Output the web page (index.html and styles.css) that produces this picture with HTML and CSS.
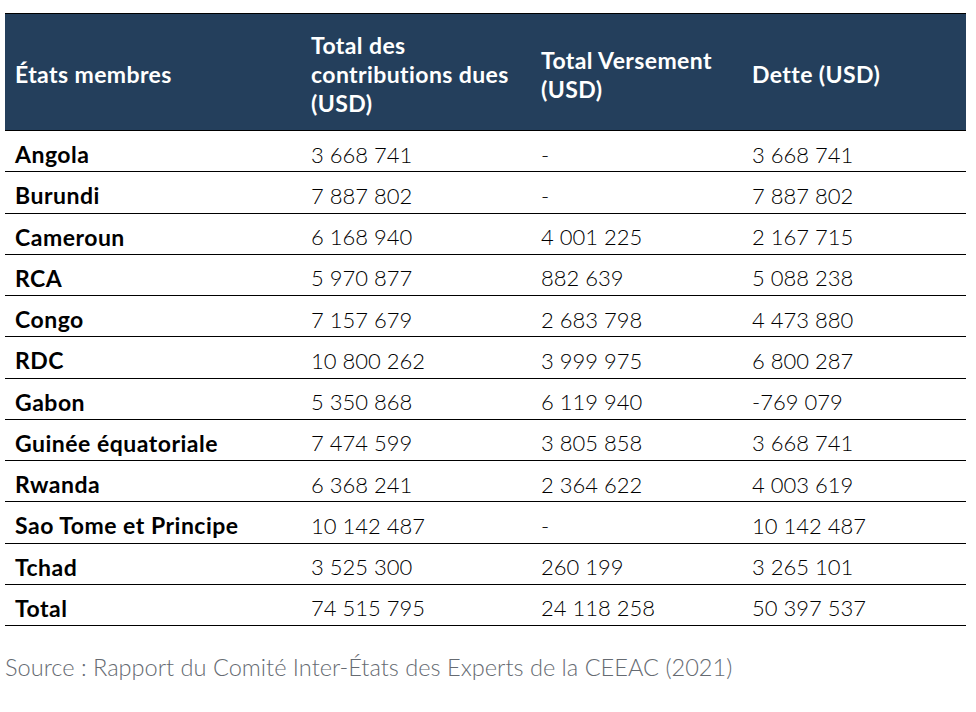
FILE: index.html
```html
<!DOCTYPE html>
<html lang="fr">
<head>
<meta charset="utf-8">
<link rel="stylesheet" href="styles.css">
</head>
<body>
<table class="data">
  <thead>
    <tr>
      <th class="c1">États membres</th>
      <th class="c2">Total des<br>contributions dues<br>(USD)</th>
      <th class="c3">Total Versement<br>(USD)</th>
      <th class="c4">Dette (USD)</th>
    </tr>
  </thead>
  <tbody>
    <tr><td class="name">Angola</td><td>3 668 741</td><td>-</td><td>3 668 741</td></tr>
    <tr><td class="name">Burundi</td><td>7 887 802</td><td>-</td><td>7 887 802</td></tr>
    <tr><td class="name">Cameroun</td><td>6 168 940</td><td>4 001 225</td><td>2 167 715</td></tr>
    <tr><td class="name">RCA</td><td>5 970 877</td><td>882 639</td><td>5 088 238</td></tr>
    <tr><td class="name">Congo</td><td>7 157 679</td><td>2 683 798</td><td>4 473 880</td></tr>
    <tr><td class="name">RDC</td><td>10 800 262</td><td>3 999 975</td><td>6 800 287</td></tr>
    <tr><td class="name">Gabon</td><td>5 350 868</td><td>6 119 940</td><td>-769 079</td></tr>
    <tr><td class="name">Guinée équatoriale</td><td>7 474 599</td><td>3 805 858</td><td>3 668 741</td></tr>
    <tr><td class="name">Rwanda</td><td>6 368 241</td><td>2 364 622</td><td>4 003 619</td></tr>
    <tr><td class="name">Sao Tome et Principe</td><td>10 142 487</td><td>-</td><td>10 142 487</td></tr>
    <tr><td class="name">Tchad</td><td>3 525 300</td><td>260 199</td><td>3 265 101</td></tr>
    <tr><td class="name">Total</td><td>74 515 795</td><td>24 118 258</td><td>50 397 537</td></tr>
  </tbody>
</table>
<p class="source">Source : Rapport du Comité Inter-États des Experts de la CEEAC (2021)</p>
</body>
</html>
```
FILE: styles.css
```css
html, body {
  margin: 0;
  padding: 0;
  background: #ffffff;
}
body {
  font-family: Lato, "Open Sans", sans-serif;
  color: #000000;
}
.data {
  margin: 13px 0 0 5px;
  width: 961px;
  border-collapse: collapse;
  table-layout: fixed;
  border-top: 1px solid #000;
}
.c1 { width: 276px; }
.c2 { width: 210px; }
.c3 { width: 191px; }
.c4 { width: 204px; }
.data th {
  background: #243f5c;
  color: #ffffff;
  font-weight: 700;
  font-size: 23px;
  letter-spacing: 0.4px;
  line-height: 29px;
  text-align: left;
  padding: 17px 10px 12px 10px;
  border-bottom: 1px solid #000;
  vertical-align: middle;
  white-space: nowrap;
}
.data td {
  font-size: 22px;
  font-weight: 300;
  height: 41.25px;
  padding: 6px 10px 0 10px;
  border-bottom: 1px solid #000;
  vertical-align: middle;
  box-sizing: border-box;
  white-space: nowrap;
}
.data td.name {
  font-weight: 700;
  font-size: 23px;
  letter-spacing: 0.5px;
}
.source {
  margin: 27px 0 0 5px;
  font-size: 23.6px;
  font-weight: 300;
  color: #666b72;
}
```
